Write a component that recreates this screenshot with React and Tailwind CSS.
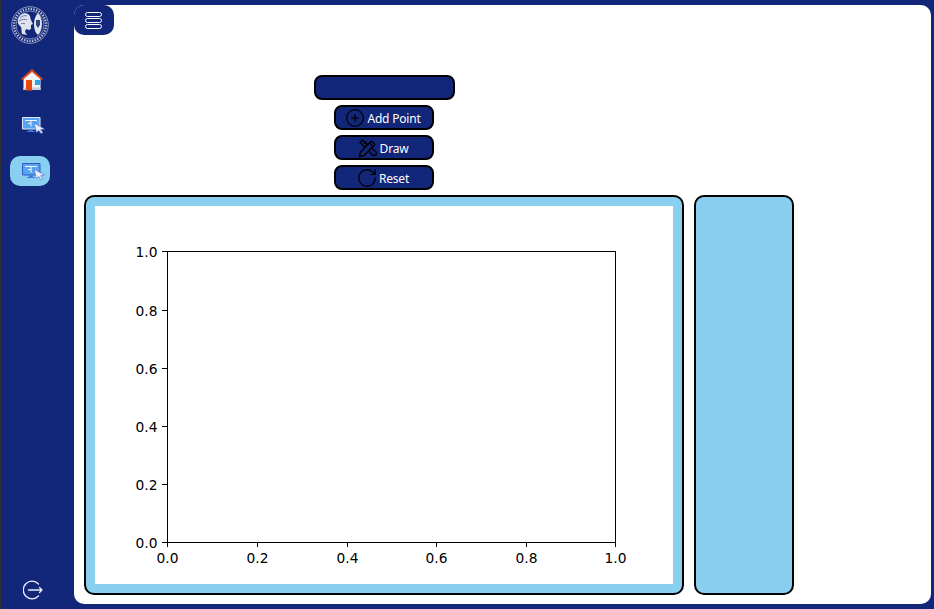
import { CirclePlus, RotateCw } from "lucide-react";

const navy = "bg-[#12267a]";

function Logo() {
  return (
    <svg width="38" height="38" viewBox="0 0 38 38" fill="none" className="block">
      <circle cx="19" cy="19" r="18.300" stroke="#aab4d0" strokeWidth="0.800" />
      <circle cx="19" cy="19" r="16" stroke="#b9c2da" strokeWidth="2.400" strokeDasharray="1.400 1.300" />
      <circle cx="19" cy="19" r="14" fill="#12267a" stroke="#b9c2da" strokeWidth="0.600" />
      <path d="M7 14c1-5 6-8 10-6 3 2 2 4 3 6l2 4-2 1v4l-2 1-3-1-1 3 2 3-5-1c-1-3 0-5-1-7-2-2-4-4-3-6z" fill="#dfe3ee" />
      <path d="M9 12c2-2 5-3 7-2M8 15c3-2 6-2 8-1M10 18c1-1 3-1 4 0" stroke="#5a6aa0" strokeWidth="0.900" />
      <path d="M27 7c2 2 4 6 4 11 0 5-2 9-4 11-3-2-4-7-4-11 0-4 1-8 4-11z" fill="#dfe3ee" />
      <path d="M25 14h4v5l-2 3-2-3z" fill="#31457f" />
    </svg>
  );
}

function HomeIcon() {
  return (
    <svg width="24" height="23" viewBox="0 0 24 23" className="block">
      <path d="M3.500 10 12 3l8.500 7v12h-17z" fill="#f2f3f5" />
      <path d="M3.500 19.500h17V22h-17z" fill="#c9cfdc" />
      <path d="M1 11 12 1l11 10-1.500 1L12 4 2.500 12z" fill="#d9491a" />
      <path d="M6 12h6v10.500H6z" fill="#e8490f" />
      <path d="M15 12h5v5h-5z" fill="#27a4e8" />
    </svg>
  );
}

function ScreenIcon({ edge }) {
  return (
    <svg width="23" height="17" viewBox="0 0 23 17" className="block">
      <path d="M0.500 0.500h17.500v11.500h-17.500z" fill="#56a5f4" stroke={edge} strokeWidth="1" />
      <path d="M7 12.500h4V14h2v1H5v-1h2z" fill="#3f78d8" />
      <path d="M3 3.500h12M9 3.500v6M6 6.500h3" stroke="#f2f6ff" strokeWidth="1" />
      <path d="M12 6 22.500 12l-4 .8 2.500 2.700-2 1-2.300-2.900-2.200 1.900z" fill="#e9eefb" stroke="#5a72cc" strokeWidth="0.700" />
    </svg>
  );
}

function LogoutIcon() {
  return (
    <svg width="20" height="20" viewBox="0 0 20 20" fill="none" stroke="#ecf0f8" strokeWidth="1.300" strokeLinecap="round" strokeLinejoin="round" className="block">
      <path d="M15.500 4A8.800 8.800 0 1 0 15.500 16" />
      <path d="M5.500 10h13.500M16.500 7.500 19 10l-2.500 2.500" />
    </svg>
  );
}

function DrawIcon() {
  return (
    <svg width="20" height="20" viewBox="0 0 20 20" fill="none" stroke="#000" strokeWidth="1.300" strokeLinejoin="round" strokeLinecap="round">
      <path d="M4.500 2 2 4.500 15 17.500l3-.5.500-2.500z" />
      <path d="M2.500 14 13.500 3 17 6.500 6 17.500l-4.500 1z" fill="#12267a" />
      <path d="M11.500 5 15 8.500M6 5.500l1.500-1.500M8 7.500 9.500 6" />
    </svg>
  );
}

function ActionButton({ icon, label }) {
  return (
    <button className={`${navy} h-[25px] w-[100px] pr-[2px] rounded-[8px] border-2 border-black flex items-center justify-center gap-[2px] text-white text-[12px] tracking-[-0.2px] font-["Noto_Sans",sans-serif]`}>
      {icon}
      <span className="pt-[2px]">{label}</span>
    </button>
  );
}

function Chart() {
  const xs = [
    [72, "0.0"],
    [162, "0.2"],
    [252, "0.4"],
    [341, "0.6"],
    [431, "0.8"],
    [520, "1.0"],
  ];
  const ys = [
    [336, "0.0"],
    [278, "0.2"],
    [220, "0.4"],
    [162, "0.6"],
    [104, "0.8"],
    [45, "1.0"],
  ];
  return (
    <svg width="578" height="378" className="block bg-white font-['DejaVu_Sans',sans-serif]">
      <rect x="72.500" y="45.500" width="448" height="291" fill="none" stroke="#000" />
      {xs.map(([x, t]) => (
        <g key={t}>
          <path d={`M${x + 0.5} 336v5`} stroke="#000" />
          <text x={x + 0.5} y="357" textAnchor="middle" fontSize="13.800" fill="#000">{t}</text>
        </g>
      ))}
      {ys.map(([y, t]) => (
        <g key={t}>
          <path d={`M67 ${y + 0.5}h5`} stroke="#000" />
          <text x="62.500" y={y + 5.500} textAnchor="end" fontSize="13.800" fill="#000">{t}</text>
        </g>
      ))}
    </svg>
  );
}

export default function App() {
  return (
    <div className={`${navy} w-[934px] h-[609px] flex overflow-hidden border-l border-l-[#333]`}>
      <aside className="w-[73px] shrink-0 flex flex-col items-start pt-[6px] pb-[9px]">
        <div className="ml-[10px]"><Logo /></div>
        <div className="ml-[9px] mt-[20px] w-[40px] h-[30px] pl-[4px] flex items-center justify-center"><HomeIcon /></div>
        <div className="ml-[9px] mt-[16px] w-[40px] h-[30px] pl-[6px] flex items-center justify-center"><ScreenIcon edge="#dfe8f8" /></div>
        <div className="ml-[9px] mt-[16px] w-[40px] h-[30px] pl-[6px] flex items-center justify-center rounded-[10px] bg-[#89cff0]"><ScreenIcon edge="#3557c0" /></div>
        <div className="mt-auto ml-[22px]"><LogoutIcon /></div>
      </aside>

      <main className="flex-1 mt-[5px] mb-[5px] mr-[3px] bg-white rounded-[10px]">
        <button className={`${navy} w-[40px] h-[30px] pr-[1px] rounded-[10px] flex flex-col items-center justify-center gap-[1px]`}>
          <span className="w-[17px] h-[5px] rounded-full border border-white" />
          <span className="w-[17px] h-[5px] rounded-full border border-white" />
          <span className="w-[17px] h-[5px] rounded-full border border-white" />
        </button>

        <div className="w-[600px] ml-[10px] mt-[40px] flex flex-col items-center gap-[5px]">
          <div className={`${navy} w-[141px] h-[25px] rounded-[8px] border-2 border-black`} />
          <ActionButton icon={<CirclePlus size={20} strokeWidth={1.500} color="#000" />} label="Add Point" />
          <ActionButton icon={<DrawIcon />} label="Draw" />
          <ActionButton icon={<RotateCw size={22} strokeWidth={1.400} color="#000" className="-mx-[1px]" />} label="Reset" />
        </div>

        <div className="mt-[5px] ml-[10px] flex gap-[10px]">
          <div className="w-[600px] h-[400px] p-[9px] rounded-[10px] border-2 border-black bg-[#89cff0]">
            <Chart />
          </div>
          <div className="w-[100px] h-[400px] rounded-[10px] border-2 border-black bg-[#89cff0]" />
        </div>
      </main>
    </div>
  );
}
